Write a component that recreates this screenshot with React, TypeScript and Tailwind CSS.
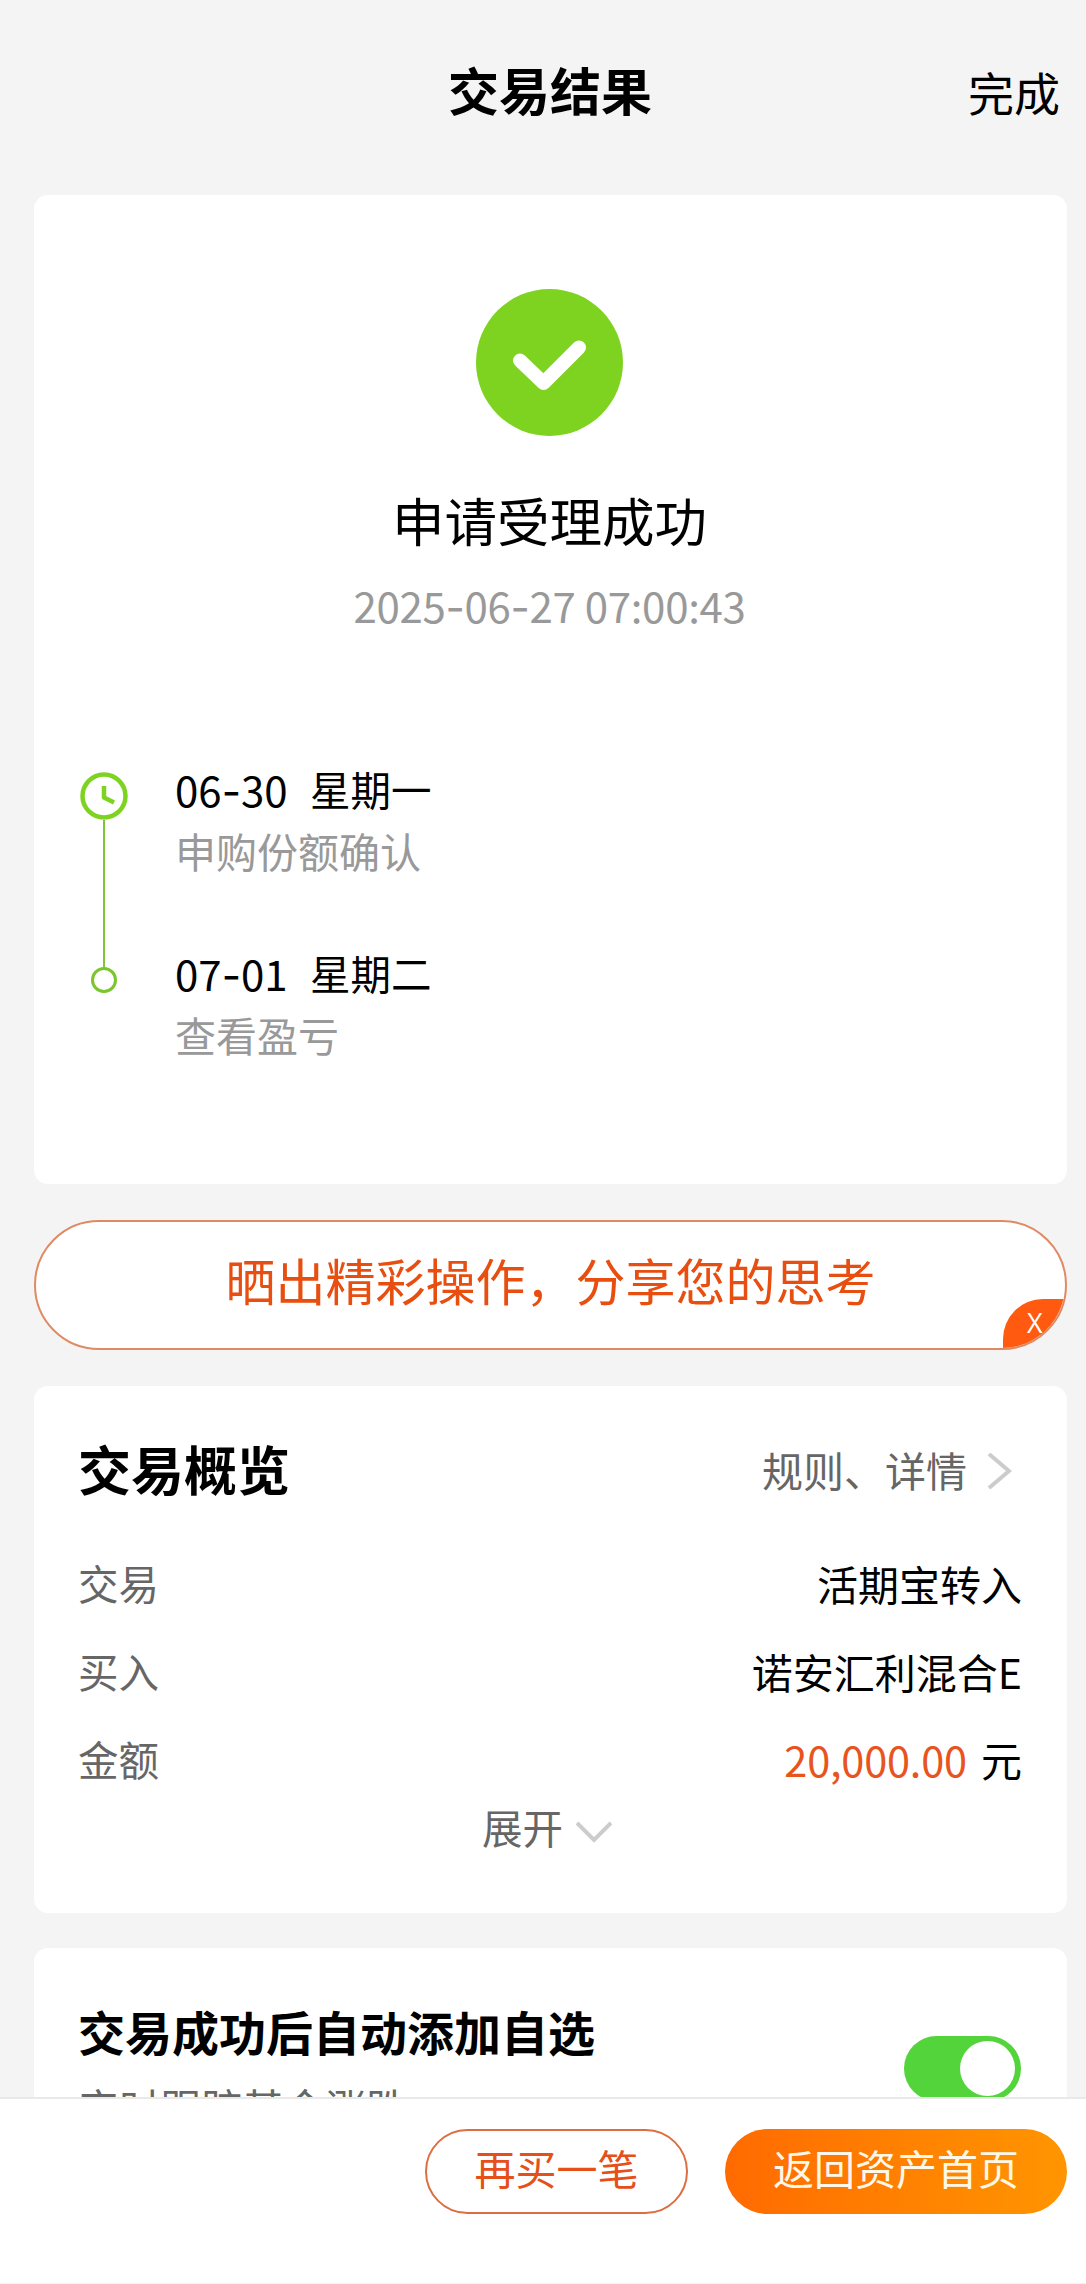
import { useState, type ReactNode } from "react";

type Step = {
    date: string;
    weekday: string;
    label: string;
};

const steps: Step[] = [
    { date: "06-30", weekday: "星期一", label: "申购份额确认" },
    { date: "07-01", weekday: "星期二", label: "查看盈亏" },
];

// digits come from the CJK face, the hyphen from Inter because it is wider
function DateText({ value }: { value: string }) {
    return (
        <>
            {value.split("-").map((part, i) => (
                <span key={i}>
                    {i > 0 && <span className="font-['Inter',sans-serif]">-</span>}
                    {part}
                </span>
            ))}
        </>
    );
}

function Header() {
    return (
        <header className="grid h-[195px] grid-cols-[1fr_auto_1fr] items-start pr-[26px] pl-[40px] text-black">
            <span />
            <h1 className="pt-[59px] text-[51px] leading-[60px] font-bold">交易结果</h1>
            <button className="justify-self-end pt-[61px] text-[46px] leading-[60px]">完成</button>
        </header>
    );
}

function SuccessIcon() {
    return (
        <svg className="size-[147px]" viewBox="0 0 147 147" fill="none">
            <circle cx="73.5" cy="73.5" r="73.5" fill="#7ED321" />
            <path d="M44 71.5L67.5 94L103 58.5" stroke="#fff" strokeWidth="14" strokeLinecap="round" strokeLinejoin="round" />
        </svg>
    );
}

function ClockIcon() {
    return (
        <svg className="size-12 shrink-0" viewBox="0 0 48 48" fill="none" stroke="#7ED321">
            <circle cx="24" cy="24" r="21.5" strokeWidth="4.5" />
            <path d="M24 14V25.5L34 30.5" strokeWidth="4.5" strokeLinejoin="round" />
        </svg>
    );
}

function ResultCard() {
    return (
        <section className="h-[989px] rounded-[14px] bg-white pt-[94px]">
            <div className="flex flex-col items-center pr-[2px]">
                <SuccessIcon />
                <h2 className="mt-[53px] text-[52.5px] leading-[60px] text-black">申请受理成功</h2>
                <p className="mt-[26px] h-[60px] text-[42px] leading-[60px] tracking-[-0.3px] text-[#999]">
                    <DateText value="2025-06-27 07:00:43" />
                </p>
            </div>
            <div className="mt-[124px] flex w-full gap-[46px] pl-[46px]">
                <div className="flex w-12 flex-col items-center pt-[13px]">
                    <ClockIcon />
                    <div className="h-[147px] w-[2px] bg-[#7cc63a]" />
                    <div className="size-[26px] rounded-full border-3 border-[#7ac62c]" />
                </div>
                <ul className="flex flex-col gap-[62px]">
                    {steps.map((step) => (
                        <li key={step.date}>
                            <p className="flex h-[60px] text-[40.5px] leading-[60px] text-black">
                                <span className="w-[136px] pl-px text-[42px]">
                                    <DateText value={step.date} />
                                </span>
                                <span>{step.weekday}</span>
                            </p>
                            <p className="pl-px text-[41px] leading-[62px] text-[#999]">{step.label}</p>
                        </li>
                    ))}
                </ul>
            </div>
        </section>
    );
}

function ShareBanner() {
    return (
        <div className="relative mt-9 flex h-[130px] items-center justify-center overflow-hidden rounded-full border-2 border-[#e08a64] bg-white">
            <span className="pb-[13px] text-[50px] leading-[60px] text-[#e84e0f]">晒出精彩操作，分享您的思考</span>
            <button className="absolute right-0 bottom-0 flex h-[49px] w-[62px] items-center rounded-tl-[40px] bg-[#ff5a10] pl-[24px] font-['Open_Sans',sans-serif] text-[27px] text-white">
                X
            </button>
        </div>
    );
}

function Row({ label, children }: { label: string; children: ReactNode }) {
    return (
        <div className="flex h-[88px] items-center justify-between text-[41px] leading-[60px]">
            <dt className="text-[40.5px] text-[#666]">{label}</dt>
            <dd className="text-black">{children}</dd>
        </div>
    );
}

function OverviewCard() {
    return (
        <section className="mt-9 h-[527px] rounded-[14px] bg-white pt-[50px] pr-[45px] pl-11">
            <div className="flex items-center justify-between">
                <h2 className="text-[53px] leading-[60px] font-bold text-black">交易概览</h2>
                <button className="flex items-center gap-5 pt-[3px] pr-[10px] text-[41px] leading-[60px] text-[#666]">
                    规则、详情
                    <svg className="mt-1 h-9 w-[25px]" viewBox="0 0 25 36" fill="none" stroke="#ccc" strokeWidth="4">
                        <path d="M2 1L22 18L2 35" />
                    </svg>
                </button>
            </div>
            <dl className="mt-10">
                <Row label="交易">活期宝转入</Row>
                <Row label="买入">诺安汇利混合E</Row>
                <Row label="金额">
                    <span className="mr-[5px] text-[41.5px] tracking-[-0.2px] text-[#e8541e]">20,000.00</span> 元
                </Row>
            </dl>
            <button className="mx-auto -mt-[6px] flex items-center gap-[13px] pr-[6px] text-[40.5px] leading-[60px] text-[#666]">
                展开
                <svg className="mt-[9px] h-[22px] w-9" viewBox="0 0 36 22" fill="none" stroke="#ccc" strokeWidth="4">
                    <path d="M1 2L18 19L35 2" />
                </svg>
            </button>
        </section>
    );
}

function FavoriteCard() {
    const [enabled, setEnabled] = useState(true);

    return (
        <section className="mt-[35px] flex h-[300px] justify-between rounded-[14px] bg-white pr-[46px] pl-11">
            <div className="pt-[53px]">
                <h2 className="text-[47px] leading-[60px] font-bold text-black">交易成功后自动添加自选</h2>
                <p className="mt-[15px] text-[41.2px] leading-[60px] text-[#666]">实时跟踪基金涨跌</p>
            </div>
            <button
                role="switch"
                aria-checked={enabled}
                onClick={() => setEnabled(!enabled)}
                className={`mt-[88px] flex h-[65px] w-[117px] rounded-full px-[6px] pt-[5px] ${enabled ? "justify-end bg-[#52d43a]" : "justify-start bg-[#ddd]"}`}
            >
                <span className="size-[55px] rounded-full bg-white" />
            </button>
        </section>
    );
}

function Footer() {
    return (
        <footer className="flex h-[187px] shrink-0 justify-end gap-[37px] border-t-2 border-b border-t-[#e9e9e9] border-b-[#f2f2f2] bg-white pt-[30px] pr-[19px] text-[41px]">
            <button className="h-[85px] w-[263px] rounded-full border-2 border-[#dc6e42] pb-[8px] leading-[73px] text-[#e5501a]">
                再买一笔
            </button>
            <button className="h-[85px] w-[342px] rounded-full bg-gradient-to-r from-[#ff6a00] to-[#ff9500] pb-[8px] leading-[77px] text-[#fff8e8]">
                返回资产首页
            </button>
        </footer>
    );
}

export default function App() {
    return (
        <div className="flex h-[2284px] w-[1086px] flex-col overflow-hidden bg-[#f4f4f4] font-['Noto_Sans_CJK_SC',sans-serif]">
            <main className="h-[2097px] overflow-hidden">
                <Header />
                <div className="pr-[19px] pl-[34px]">
                    <ResultCard />
                    <ShareBanner />
                    <OverviewCard />
                    <FavoriteCard />
                </div>
            </main>
            <Footer />
        </div>
    );
}
